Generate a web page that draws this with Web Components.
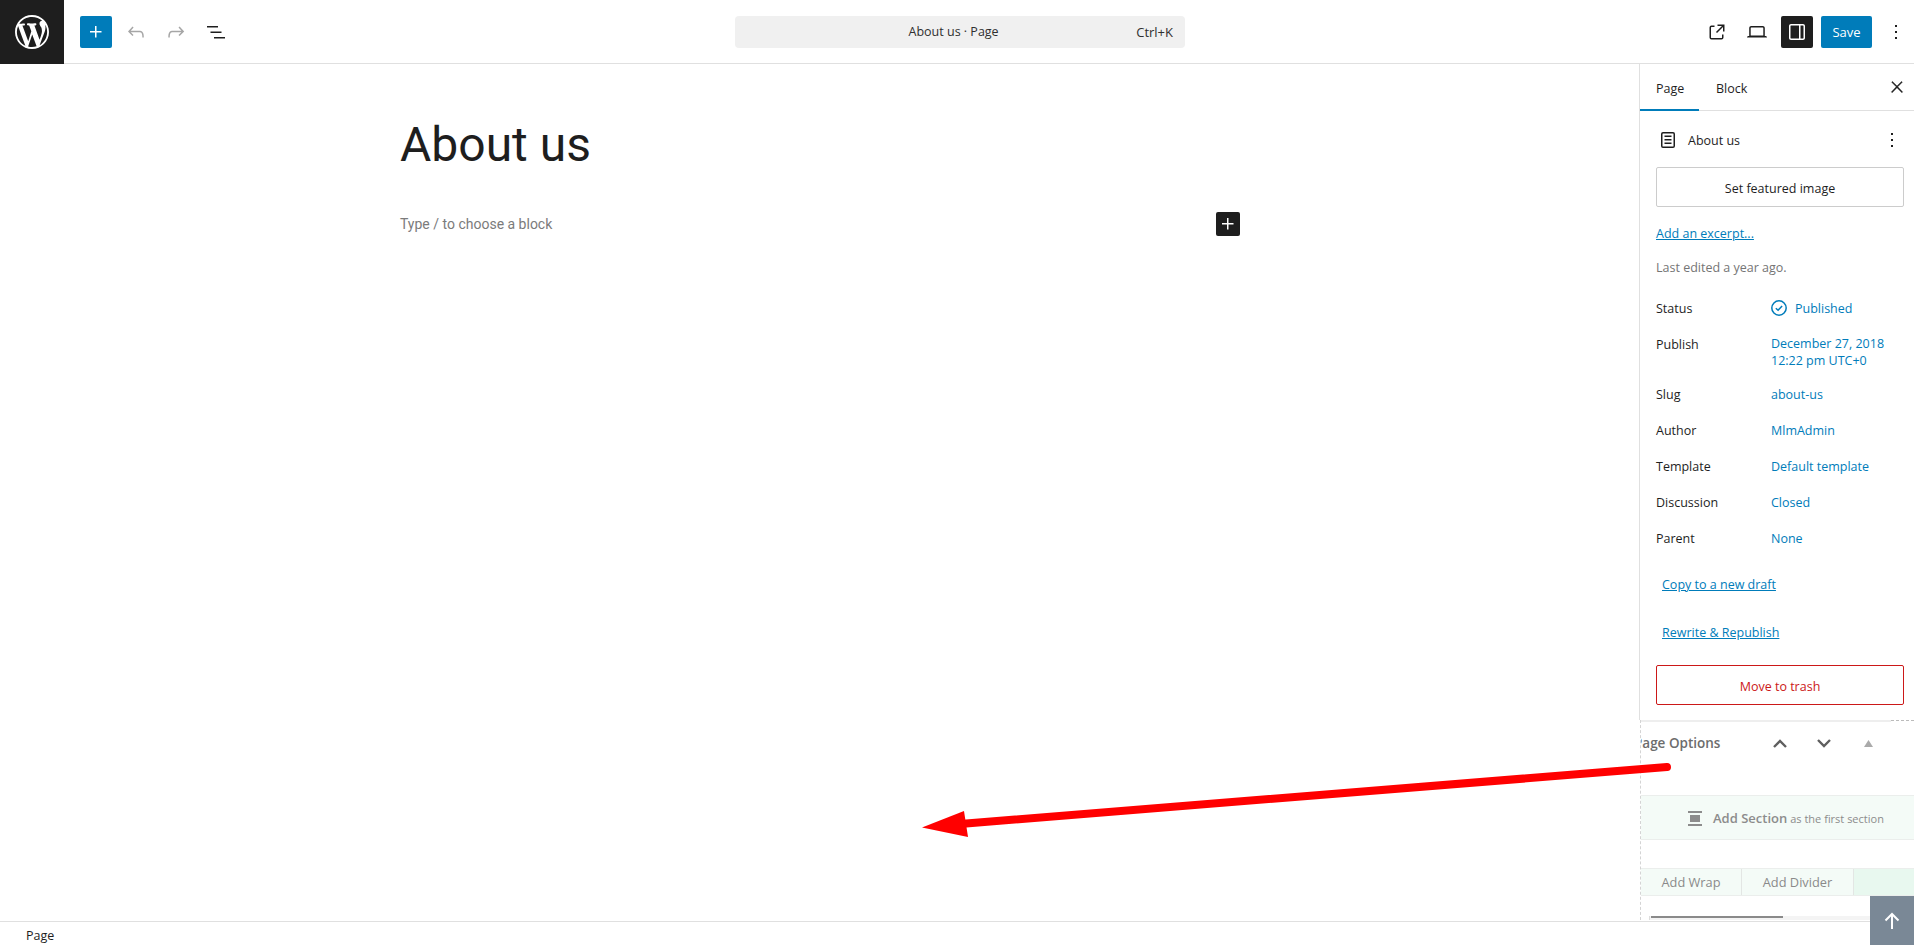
<!DOCTYPE html>
<html>
<head>
<meta charset="utf-8">
<title>About us</title>
<style>
  html, body { margin: 0; height: 100%; overflow: hidden; background: #fff; }
  body { font: 12.5px "Open Sans", "Noto Sans", sans-serif; color: #1e1e1e; }
  #app { display: grid; grid-template-rows: 64px 857px 24px; height: 945px; position: relative; }
  #middle { display: grid; grid-template-columns: 1639px 275px; min-height: 0; }
</style>
</head>
<body>
<div id="app">
  <wp-topbar></wp-topbar>
  <div id="middle">
    <wp-canvas title-text="About us" hint="Type / to choose a block"></wp-canvas>
    <wp-sidebar>
      <wp-meta-row label="Status" icon>Published</wp-meta-row>
      <wp-meta-row label="Publish" class="two">December 27, 2018<br>12:22 pm UTC+0</wp-meta-row>
      <wp-meta-row label="Slug">about-us</wp-meta-row>
      <wp-meta-row label="Author">MlmAdmin</wp-meta-row>
      <wp-meta-row label="Template">Default template</wp-meta-row>
      <wp-meta-row label="Discussion">Closed</wp-meta-row>
      <wp-meta-row label="Parent">None</wp-meta-row>
      <wp-page-options slot="options"></wp-page-options>
    </wp-sidebar>
  </div>
  <wp-footer>Page</wp-footer>
  <wp-arrow></wp-arrow>
  <wp-scroll-top></wp-scroll-top>
</div>

<script>
const icons = {
  plus: "M11 12.5V17.5H12.5V12.5H17.5V11H12.5V6H11V11H6V12.5H11Z",
  undo: "M18.3 11.7c-.6-.6-1.4-.9-2.3-.9H6.7l2.9-3.3-1.1-1-4.5 5L8.5 16l1-1-2.7-2.7H16c.5 0 .9.2 1.3.5 1 1 1 3.4 1 4.5v.3h1.5v-.2c0-1.5 0-4.3-1.5-5.7z",
  redo: "M15.6 6.5l-1.1 1 2.9 3.3H8c-.9 0-1.7.3-2.3.9-1.4 1.5-1.4 4.2-1.4 5.6v.2h1.5v-.3c0-1.1 0-3.5 1-4.5.3-.3.7-.5 1.3-.5h9.2L14.5 15l1.1 1.1 4.6-4.6-4.6-5z",
  list: "M3 6h11v1.5H3V6Zm3.5 5.5h11V13h-11v-1.5ZM21 17H10v1.5h11V17Z",
  external: "M19.5 4.5h-7V6h4.44l-5.97 5.97 1.06 1.06L18 7.06v4.44h1.5v-7Zm-13 1a2 2 0 0 0-2 2v10a2 2 0 0 0 2 2h10a2 2 0 0 0 2-2v-3H17v3a.5.5 0 0 1-.5.5h-10a.5.5 0 0 1-.5-.5v-10a.5.5 0 0 1 .5-.5h3V5.5h-3Z",
  laptop: "M20.5 16h-.7V8c0-1.1-.9-2-2-2H6.2c-1.1 0-2 .9-2 2v8h-.7c-.8 0-1.5.7-1.5 1.5h20c0-.8-.7-1.5-1.5-1.5zM5.7 8c0-.3.2-.5.5-.5h11.6c.3 0 .5.2.5.5v7.6H5.7V8z",
  drawer: "M18 4H6c-1.1 0-2 .9-2 2v12c0 1.1.9 2 2 2h12c1.1 0 2-.9 2-2V6c0-1.1-.9-2-2-2zm-4 14.5H6c-.3 0-.5-.2-.5-.5V6c0-.3.2-.5.5-.5h8v13zm4.5-.5c0 .3-.2.5-.5.5h-2.5v-13H18c.3 0 .5.2.5.5v12z",
  more: "M13 19h-2v-2h2v2zm0-6h-2v-2h2v2zm0-6h-2V5h2v2z",
  close: "M13 11.8l6.1-6.3-1-1-6.1 6.2-6.1-6.2-1 1 6.1 6.3-6.5 6.7 1 1 6.5-6.6 6.5 6.6 1-1z",
  page: "M15.5 7.5h-7V9h7V7.5Zm-7 3.5h7v1.5h-7V11Zm7 3.5h-7V16h7v-1.5ZM17 4H7a2 2 0 0 0-2 2v12a2 2 0 0 0 2 2h10a2 2 0 0 0 2-2V6a2 2 0 0 0-2-2ZM7 5.5h10a.5.5 0 0 1 .5.5v12a.5.5 0 0 1-.5.5H7a.5.5 0 0 1-.5-.5V6a.5.5 0 0 1 .5-.5Z",
};

class WpIcon extends HTMLElement {
  connectedCallback() {
    const size = this.getAttribute("size") || 24;
    const root = this.shadowRoot || this.attachShadow({ mode: "open" });
    root.innerHTML = `
      <style>
        :host { display: inline-flex; width: ${size}px; height: ${size}px; flex: none; }
        svg { display: block; fill: currentColor; stroke: currentColor; stroke-width: var(--icon-stroke, 0); }
      </style>
      <svg width="${size}" height="${size}" viewBox="0 0 24 24"><path d="${icons[this.getAttribute("name")]}"/></svg>`;
  }
}
customElements.define("wp-icon", WpIcon);

const topbarTemplate = document.createElement("template");
topbarTemplate.innerHTML = `
  <style>
    :host { display: flex; align-items: center; height: 64px; box-sizing: border-box; border-bottom: 1px solid #e0e0e0; background: #fff; }
    .logo { width: 64px; height: 64px; margin-bottom: -1px; background: #1e1e1e; display: flex; align-items: center; justify-content: center; color: #fff; flex: none; }
    .left { width: 671px; display: flex; align-items: center; padding-left: 16px; box-sizing: border-box; flex: none; }
    .btn { width: 32px; height: 32px; display: flex; align-items: center; justify-content: center; border-radius: 2px; flex: none; }
    .add { background: #007cba; color: #fff; }
    .muted { color: #a6a6a6; margin-left: 8px; }
    .left .list { margin-left: 8px; }
    .command { width: 450px; height: 32px; background: #f0f0f0; border-radius: 4px; display: flex; align-items: center; box-sizing: border-box; padding: 0 12px; color: #2f2f2f; flex: none; font-size: 13px; }
    .command .name { flex: 1; text-align: center; padding-left: 24px; font-size: 12.5px; }
    .right { display: flex; align-items: center; margin-left: auto; padding-right: 2px; }
    .dark { background: #1e1e1e; color: #fff; }
    .save { width: 51px; height: 32px; background: #007cba; color: #fff; border-radius: 2px; display: flex; align-items: center; justify-content: center; margin-left: 8px; font-size: 13px; }
    .right .btn { margin-left: 8px; }
    .right .btn:first-child { margin-left: 0; }
  </style>
  <div class="logo">
    <svg width="34" height="34" viewBox="0 0 20 20" fill="currentColor"><path d="M20 10c0-5.51-4.49-10-10-10C4.48 0 0 4.49 0 10c0 5.52 4.48 10 10 10 5.51 0 10-4.48 10-10zM7.78 15.37L4.37 6.22c.55-.02 1.17-.08 1.17-.08.5-.06.44-1.13-.06-1.11 0 0-1.45.11-2.37.11-.18 0-.37 0-.58-.01C4.12 2.69 6.87 1.11 10 1.11c2.33 0 4.45.87 6.05 2.34-.68-.11-1.65.39-1.65 1.58 0 .74.45 1.36.9 2.1.35.61.55 1.36.55 2.46 0 1.49-1.4 5-1.4 5l-3.03-8.37c.54-.02.82-.17.82-.17.5-.05.44-1.25-.06-1.22 0 0-1.44.12-2.38.12-.87 0-2.33-.12-2.33-.12-.5-.03-.56 1.2-.06 1.22l.92.08 1.26 3.41zM17.41 10c.24-.64.74-1.87.43-4.25.7 1.29 1.05 2.71 1.05 4.25 0 3.29-1.73 6.24-4.4 7.78.97-2.59 1.94-5.2 2.92-7.78zM6.1 18.09C3.12 16.65 1.11 13.53 1.11 10c0-1.3.23-2.48.72-3.59C3.25 10.3 4.67 14.2 6.1 18.09zm4.03-6.63l2.58 6.98c-.86.29-1.76.45-2.71.45-.79 0-1.57-.11-2.29-.33.81-2.38 1.62-4.74 2.42-7.1z"/></svg>
  </div>
  <div class="left">
    <div class="btn add"><wp-icon name="plus"></wp-icon></div>
    <div class="btn muted"><wp-icon name="undo"></wp-icon></div>
    <div class="btn muted"><wp-icon name="redo"></wp-icon></div>
    <div class="btn list"><wp-icon name="list"></wp-icon></div>
  </div>
  <div class="command"><span class="name">About us · Page</span><span>Ctrl+K</span></div>
  <div class="right">
    <div class="btn"><wp-icon name="external"></wp-icon></div>
    <div class="btn"><wp-icon name="laptop"></wp-icon></div>
    <div class="btn dark"><wp-icon name="drawer"></wp-icon></div>
    <div class="save">Save</div>
    <div class="btn more"><wp-icon name="more"></wp-icon></div>
  </div>`;

class WpTopbar extends HTMLElement {
  constructor() {
    super();
    this.attachShadow({ mode: "open" });
    this.shadowRoot.appendChild(topbarTemplate.content.cloneNode(true));
  }
}
customElements.define("wp-topbar", WpTopbar);

class WpCanvas extends HTMLElement {
  constructor() {
    super();
    this.attachShadow({ mode: "open" });
  }
  connectedCallback() {
    this.shadowRoot.innerHTML = `
      <style>
        :host { display: block; background: #fff; font-family: Roboto, sans-serif; }
        .column { width: 840px; margin-left: 400px; }
        h1 { margin: 0; padding-top: 53px; font-size: 48px; font-weight: 400; line-height: 56px; color: #1e1e1e; }
        .hint { display: flex; justify-content: space-between; align-items: center; margin-top: 39px; height: 24px; color: #7b7b7b; font-size: 14px; }
        .insert { width: 24px; height: 24px; background: #1e1e1e; color: #fff; border-radius: 2px; display: flex; align-items: center; justify-content: center; }
      </style>
      <div class="column">
        <h1>${this.getAttribute("title-text")}</h1>
        <div class="hint"><span>${this.getAttribute("hint")}</span><span class="insert"><wp-icon name="plus" size="24"></wp-icon></span></div>
      </div>`;
  }
}
customElements.define("wp-canvas", WpCanvas);

const sidebarTemplate = document.createElement("template");
sidebarTemplate.innerHTML = `
  <style>
    :host { display: flex; flex-direction: column; box-sizing: border-box; overflow: hidden; background: #fff; }
    .tabs { display: flex; align-items: stretch; height: 47px; box-sizing: border-box; border-bottom: 1px solid #e0e0e0; border-left: 1px solid #e0e0e0; flex: none; }
    .tab { display: flex; align-items: center; padding: 2px 16px 0; position: relative; }
    .tab.on { width: 59px; box-sizing: border-box; }
    .tab.on::after { content: ""; position: absolute; left: 0; right: 0; bottom: -1px; height: 2px; background: #007cba; }
    .tab + .tab { padding-left: 17px; }
    .tabs .x { margin-left: auto; margin-right: 8px; display: flex; align-items: center; --icon-stroke: .6; }
    .body { padding: 1px 10px 15px 16px; border-left: 1px solid #e0e0e0; flex: none; }
    .title { display: flex; align-items: center; height: 36px; margin-top: 10px; }
    .title wp-icon { margin-right: 8px; }
    .title .dots { margin-left: auto; margin-right: 0; }
    .button { display: flex; align-items: center; justify-content: center; height: 40px; box-sizing: border-box; border: 1px solid #ccc; border-radius: 2px; margin-top: 9px; padding-top: 2px; }
    a { color: #007cba; text-decoration: underline; display: block; line-height: 18px; }
    .excerpt { margin-top: 18px; }
    .edited { margin-top: 16px; line-height: 18px; color: #757575; }
    .meta { display: flex; flex-direction: column; gap: 18px; margin-top: 23px; }
    .copy { margin: 28px 0 0 6px; }
    .rewrite { margin: 30px 0 0 6px; }
    .trash { margin-top: 23px; border-color: #cc1818; color: #cc1818; }
  </style>
  <div class="tabs">
    <div class="tab on">Page</div>
    <div class="tab">Block</div>
    <div class="x"><wp-icon name="close" size="18"></wp-icon></div>
  </div>
  <div class="body">
    <div class="title"><wp-icon name="page"></wp-icon><span>About us</span><wp-icon class="dots" name="more"></wp-icon></div>
    <div class="button">Set featured image</div>
    <a class="excerpt">Add an excerpt...</a>
    <div class="edited">Last edited a year ago.</div>
    <div class="meta"><slot></slot></div>
    <a class="copy">Copy to a new draft</a>
    <a class="rewrite">Rewrite &amp; Republish</a>
    <div class="button trash">Move to trash</div>
  </div>
  <slot name="options"></slot>`;

class WpSidebar extends HTMLElement {
  constructor() {
    super();
    this.attachShadow({ mode: "open" });
    this.shadowRoot.appendChild(sidebarTemplate.content.cloneNode(true));
  }
}
customElements.define("wp-sidebar", WpSidebar);

class WpMetaRow extends HTMLElement {
  constructor() {
    super();
    this.attachShadow({ mode: "open" });
  }
  connectedCallback() {
    const check = this.hasAttribute("icon")
      ? `<svg width="18" height="18" viewBox="0 0 18 18" fill="none" stroke="#007cba" stroke-width="1.5"><circle cx="9" cy="9" r="7.2"/><path d="M5.8 9.2l2.300 2.100 4-4.400"/></svg>`
      : "";
    this.shadowRoot.innerHTML = `
      <style>
        :host { display: grid; grid-template-columns: 115px 1fr; line-height: 18px; }
        :host(.two) { margin-bottom: -1px; }
        :host(.two) .value { line-height: 17px; margin-top: -1px; }
        .value { color: #007cba; display: flex; align-items: flex-start; gap: 7px; }
        :host([icon]) .value { margin-left: -1px; }
        svg { flex: none; margin-top: -1px; }
      </style>
      <span>${this.getAttribute("label")}</span>
      <span class="value">${check}<span><slot></slot></span></span>`;
  }
}
customElements.define("wp-meta-row", WpMetaRow);

const optionsTemplate = document.createElement("template");
optionsTemplate.innerHTML = `
  <style>
    :host { display: block; margin-left: 1px; height: 200px; color: #8c8c8c; overflow: hidden; border-left: 1px dashed #d4d4d4; font-size: 12.8px; }
    .edge { display: flex; height: 2px; }
    .edge i { display: block; width: 250px; background: #eee; }
    .edge b { display: block; flex: 1; border-top: 1px dashed #bbb; }
    .head { display: flex; align-items: center; height: 42px; }
    .label { margin-left: -7px; font-weight: 600; color: #6d6d6d; width: 139px; flex: none; font-size: 13.5px; white-space: nowrap; }
    .head svg { flex: none; }
    .head .down { margin-left: 30px; }
    .head .tri { margin-left: 33px; }
    .section { margin-top: 31px; height: 45px; box-sizing: border-box; background: #f4fbf7; border-top: 1px solid #ebeeec; border-bottom: 1px solid #ebeeec; display: flex; align-items: center; padding-left: 47px; padding-top: 1px; }
    .section strong { font-weight: 600; font-size: 13px; margin: 0 3px 0 11px; }
    .section small { font-size: 11px; }
    .bars { width: 14px; display: flex; flex-direction: column; gap: 2px; }
    .bars i { display: block; height: 2px; background: #8c8c8c; }
    .bars i.mid { height: 7px; margin: 0 2px; background: #8c8c8c; }
    .adds { margin-top: 28px; height: 28px; box-sizing: border-box; display: flex; border-top: 1px solid #ebeeec; border-bottom: 1px solid #ebeeec; background: #e8f8ef; }
    .adds span { display: flex; align-items: center; justify-content: center; background: #f4fbf7; border-right: 1px solid #e3e6e4; height: 100%; color: #8a8a8a; }
    .adds .wrap { width: 100px; }
    .adds .divider { width: 111px; }
    .track { margin: 20px 0 0 8px; height: 5px; box-sizing: border-box; background: #f4f4f4; border-left: 1px solid #ddd; position: relative; }
    .track::before { content: ""; position: absolute; left: 1px; top: 0; width: 132px; height: 2px; background: #8a8a8a; }
  </style>
  <div class="edge"><i></i><b></b></div>
  <div class="head">
    <span class="label">Page Options</span>
    <svg width="14" height="9" viewBox="0 0 14 9" fill="none" stroke="#5f5f5f" stroke-width="2.400"><path d="M1 8l6-6 6 6"/></svg>
    <svg class="down" width="14" height="9" viewBox="0 0 14 9" fill="none" stroke="#5f5f5f" stroke-width="2.400"><path d="M1 1l6 6 6-6"/></svg>
    <svg class="tri" width="9" height="7" viewBox="0 0 9 7" fill="#aaa"><path d="M4.5 0L9 7H0z"/></svg>
  </div>
  <div class="section"><div class="bars"><i></i><i class="mid"></i><i></i></div><strong>Add Section</strong><small>as the first section</small></div>
  <div class="adds"><span class="wrap">Add Wrap</span><span class="divider">Add Divider</span></div>
  <div class="track"></div>`;

class WpPageOptions extends HTMLElement {
  constructor() {
    super();
    this.attachShadow({ mode: "open" });
    this.shadowRoot.appendChild(optionsTemplate.content.cloneNode(true));
  }
}
customElements.define("wp-page-options", WpPageOptions);

class WpFooter extends HTMLElement {
  constructor() {
    super();
    this.attachShadow({ mode: "open" }).innerHTML = `
      <style>
        :host { display: flex; align-items: center; height: 24px; box-sizing: border-box; border-top: 1px solid #e0e0e0; padding: 3px 0 0 26px; background: #fff; }
      </style>
      <slot></slot>`;
  }
}
customElements.define("wp-footer", WpFooter);

// annotation drawn over the screenshot, lives on the page and not in a column
class WpArrow extends HTMLElement {
  constructor() {
    super();
    this.attachShadow({ mode: "open" }).innerHTML = `
      <style>
        :host { position: absolute; left: 0; top: 0; pointer-events: none; }
        svg { display: block; }
      </style>
      <svg width="1914" height="945" viewBox="0 0 1914 945">
        <line x1="1667" y1="767" x2="960" y2="824" stroke="#f00" stroke-width="8" stroke-linecap="round"/>
        <path d="M922 827.5L964 811L968 837Z" fill="#f00"/>
      </svg>`;
  }
}
customElements.define("wp-arrow", WpArrow);

class WpScrollTop extends HTMLElement {
  constructor() {
    super();
    this.attachShadow({ mode: "open" }).innerHTML = `
      <style>
        :host { position: absolute; right: 0; bottom: 0; width: 44px; height: 49px; background: #7a8896; display: flex; align-items: center; justify-content: center; }
      </style>
      <svg width="16" height="18" viewBox="0 0 16 18" fill="none" stroke="#fff" stroke-width="2"><path d="M8 17V2M1.5 8.5L8 2l6.500 6.500"/></svg>`;
  }
}
customElements.define("wp-scroll-top", WpScrollTop);
</script>
</body>
</html>
